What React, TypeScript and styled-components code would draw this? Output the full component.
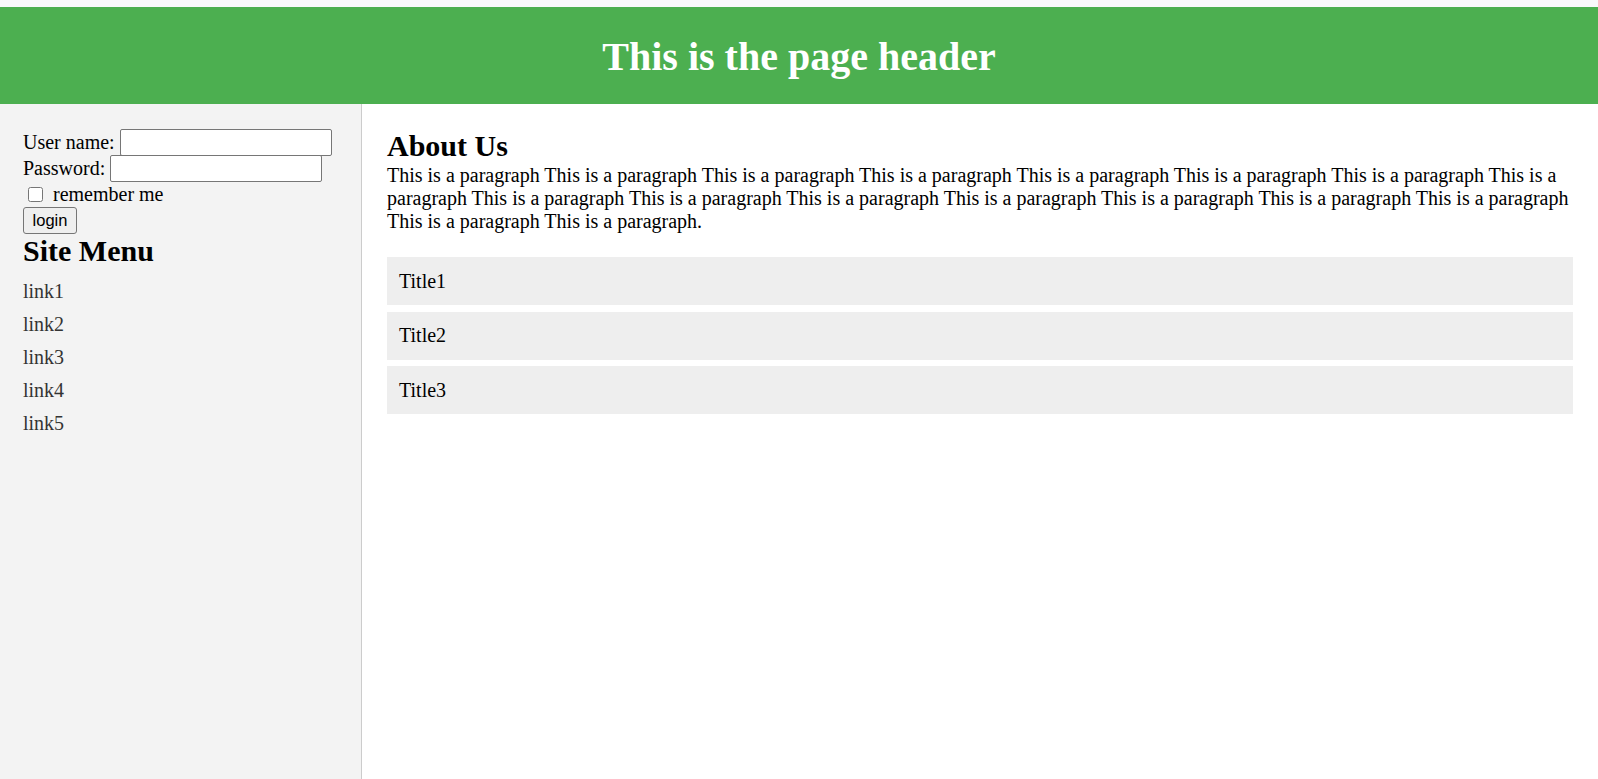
import React from "react";
import styled, { createGlobalStyle } from "styled-components";

const Global = createGlobalStyle`
  html, body {
    margin: 0;
    padding: 0;
    background: #ffffff;
  }
  body {
    font-family: "Liberation Serif", "Times New Roman", serif;
    font-size: 20px;
    line-height: 23px;
    color: #000;
  }
  * { box-sizing: border-box; }
`;

const Page = styled.div`
  min-height: 100vh;
  display: flex;
  flex-direction: column;
  padding-top: 7px;
  background: #f9f9fb;
`;

const Header = styled.header`
  height: 97px;
  background: #4caf50;
  display: flex;
  align-items: center;
  justify-content: center;
`;

const HeaderTitle = styled.h1`
  margin: 0;
  padding-top: 2px;
  font-size: 40px;
  line-height: 46px;
  font-weight: bold;
  color: #ffffff;
`;

const Body = styled.div`
  flex: 1;
  display: flex;
  background: #ffffff;
`;

const Sidebar = styled.aside`
  width: 362px;
  flex-shrink: 0;
  background: #f3f3f3;
  border-right: 1px solid #cccccc;
  padding: 25px 23px 0 23px;
`;

const LoginForm = styled.form`
  display: flex;
  flex-direction: column;
  align-items: flex-start;
`;

const FieldRow = styled.label`
  display: flex;
  align-items: center;
  gap: 5px;
  height: 26.5px;
`;

const TextInput = styled.input`
  width: 212px;
  height: 27px;
  border: 1px solid #767676;
  border-radius: 2px;
  background: #fff;
  padding: 1px 2px;
  font-family: "Liberation Sans", Arial, sans-serif;
  font-size: 16px;
`;

const CheckRow = styled.label`
  display: flex;
  align-items: center;
  height: 24px;
  margin-top: 0.5px;
`;

const CheckBox = styled.input`
  width: 15px;
  height: 15px;
  margin: 0 10px 0 5px;
`;

const LoginButton = styled.button`
  height: 27px;
  width: 54px;
  padding: 0;
  font-family: "Liberation Sans", Arial, sans-serif;
  font-size: 16.5px;
  color: #000;
  background: #efefef;
  border: 1px solid #767676;
  border-radius: 3px;
`;

const SectionTitle = styled.h2`
  margin: 0;
  font-size: 30px;
  line-height: 33px;
  font-weight: bold;
`;

const Menu = styled.nav`
  display: flex;
  flex-direction: column;
  margin-top: 8px;
`;

const MenuLink = styled.a`
  display: block;
  padding: 5px 0;
  color: #333333;
  text-decoration: none;
`;

const Main = styled.main`
  flex: 1;
  padding: 25px 25px 0 25px;
`;

const Paragraph = styled.p`
  margin: 2px 0 24px 0;
`;

const Panels = styled.div`
  display: flex;
  flex-direction: column;
  gap: 6.5px;
`;

const Panel = styled.div`
  height: 48px;
  background: #eeeeee;
  padding: 0 12px;
  display: flex;
  align-items: center;
`;

const paragraph =
  Array.from({ length: 17 }, () => "This is a paragraph").join(" ") + ".";

export default function App() {
  return (
    <>
      <Global />
      <Page>
        <Header>
          <HeaderTitle>This is the page header</HeaderTitle>
        </Header>
        <Body>
          <Sidebar>
            <LoginForm onSubmit={(e) => e.preventDefault()}>
              <FieldRow>
                User name:
                <TextInput type="text" />
              </FieldRow>
              <FieldRow>
                Password:
                <TextInput type="password" />
              </FieldRow>
              <CheckRow>
                <CheckBox type="checkbox" />
                remember me
              </CheckRow>
              <LoginButton type="submit">login</LoginButton>
            </LoginForm>
            <SectionTitle>Site Menu</SectionTitle>
            <Menu>
              {["link1", "link2", "link3", "link4", "link5"].map((l) => (
                <MenuLink key={l} href="#">
                  {l}
                </MenuLink>
              ))}
            </Menu>
          </Sidebar>
          <Main>
            <SectionTitle>About Us</SectionTitle>
            <Paragraph>{paragraph}</Paragraph>
            <Panels>
              <Panel>Title1</Panel>
              <Panel>Title2</Panel>
              <Panel>Title3</Panel>
            </Panels>
          </Main>
        </Body>
      </Page>
    </>
  );
}
